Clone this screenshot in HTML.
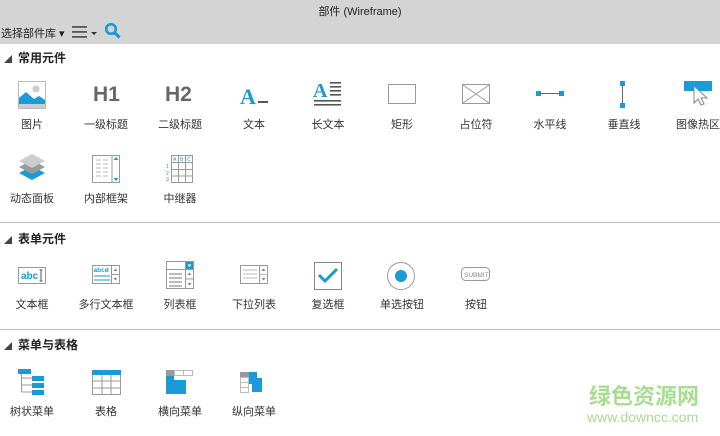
<!DOCTYPE html>
<html><head><meta charset="utf-8"><style>
*{margin:0;padding:0;box-sizing:border-box}
body{width:720px;height:436px;overflow:hidden;background:#fff;font-family:"Liberation Sans","Noto Sans CJK SC",sans-serif;position:relative;color:#333}
.a{position:absolute}
.lbl{position:absolute;width:74px;text-align:center;font-size:11px;color:#333}
.sec{position:absolute;left:4px;font-size:12px;font-weight:bold;color:#222}
.sec span{font-size:8px;color:#444;margin-right:6px;font-weight:normal}
.hr{position:absolute;left:0;width:720px;height:1px;background:#bbb}
svg{position:absolute}
</style></head><body>
<div class="a" style="left:0;top:0;width:720px;height:44px;background:#d4d4d4"></div>
<div class="a" style="left:0;top:3px;width:720px;text-align:center;font-size:11px;color:#222">部件 (Wireframe)</div>
<div class="a" style="left:1px;top:25px;font-size:11px;color:#222">选择部件库 ▾</div>
<svg style="left:72px;top:25px" width="30" height="14"><rect x="0" y="1" width="15" height="1.8" fill="#555"/><rect x="0" y="6" width="15" height="1.8" fill="#555"/><rect x="0" y="11" width="15" height="1.8" fill="#555"/><path d="M19 7h6l-3 3z" fill="#333"/></svg>
<svg style="left:104px;top:22px" width="18" height="18"><circle cx="7" cy="7" r="4.8" fill="none" stroke="#1a9ad6" stroke-width="2.6"/><path d="M10.5 10.5l5 5" stroke="#1a9ad6" stroke-width="3.2"/></svg>

<div class="sec" style="top:49px"><span>◢</span>常用元件</div>
<svg style="left:18px;top:81px" width="28" height="28"><rect x="0.5" y="0.5" width="27" height="27" fill="#fff" stroke="#bbb"/><circle cx="18" cy="8" r="3.5" fill="#ccc"/><path d="M1 17l7-6 8 7 5-3 6 4v6H1z" fill="#1a9ad6"/><rect x="1" y="23" width="26" height="4" fill="#ccc"/></svg>
<div class="a" style="left:93px;top:83px;font-size:21px;font-weight:bold;color:#666">H1</div>
<div class="a" style="left:165px;top:83px;font-size:21px;font-weight:bold;color:#666">H2</div>
<div class="a" style="left:240px;top:84px;font-family:'Liberation Serif',serif;font-size:22px;font-weight:bold;color:#1a9ad6">A</div>
<div class="a" style="left:258px;top:101px;width:10px;height:2px;background:#555"></div>
<div class="a" style="left:313px;top:80px;font-family:'Liberation Serif',serif;font-size:20px;font-weight:bold;color:#1a9ad6">A</div>
<svg style="left:313px;top:81px" width="30" height="28"><rect x="17" y="1" width="11" height="1.6" fill="#555"/><rect x="17" y="5" width="11" height="1.6" fill="#555"/><rect x="17" y="9" width="11" height="1.6" fill="#555"/><rect x="17" y="13" width="11" height="1.6" fill="#555"/><rect x="1" y="19" width="27" height="1.6" fill="#555"/><rect x="1" y="23" width="27" height="1.6" fill="#555"/></svg>
<svg style="left:388px;top:84px" width="30" height="22"><rect x="0.5" y="0.5" width="27" height="19" fill="#fff" stroke="#999"/></svg>
<svg style="left:462px;top:84px" width="30" height="22"><rect x="0.5" y="0.5" width="27" height="19" fill="#fff" stroke="#999"/><path d="M1 1l26 18M27 1L1 19" stroke="#999"/></svg>
<svg style="left:535px;top:89px" width="32" height="10"><rect x="1" y="2" width="5" height="5" fill="#1a9ad6"/><rect x="24" y="2" width="5" height="5" fill="#1a9ad6"/><path d="M5 4.5h20" stroke="#666"/></svg>
<svg style="left:618px;top:80px" width="10" height="30"><rect x="2" y="1" width="5" height="5" fill="#1a9ad6"/><rect x="2" y="23" width="5" height="5" fill="#1a9ad6"/><path d="M4.5 5v19" stroke="#666"/></svg>
<svg style="left:684px;top:80px" width="30" height="30"><rect x="0" y="1" width="28" height="10" fill="#1a9ad6"/><path d="M10 6v17l4-4 3 6 3-1-3-6h6z" fill="#fff" stroke="#888"/></svg>
<div class="lbl" style="left:-5px;top:116px">图片</div>
<div class="lbl" style="left:69px;top:116px">一级标题</div>
<div class="lbl" style="left:143px;top:116px">二级标题</div>
<div class="lbl" style="left:217px;top:116px">文本</div>
<div class="lbl" style="left:291px;top:116px">长文本</div>
<div class="lbl" style="left:365px;top:116px">矩形</div>
<div class="lbl" style="left:439px;top:116px">占位符</div>
<div class="lbl" style="left:513px;top:116px">水平线</div>
<div class="lbl" style="left:587px;top:116px">垂直线</div>
<div class="lbl" style="left:661px;top:116px">图像热区</div>
<svg style="left:17px;top:154px" width="30" height="30"><path d="M15 12l13 7-13 7-13-7z" fill="#1a9ad6"/><path d="M15 6l13 7-13 7-13-7z" fill="#999"/><path d="M15 0l13 7-13 7-13-7z" fill="#ccc"/></svg>
<svg style="left:92px;top:155px" width="30" height="30"><rect x="0.5" y="0.5" width="27" height="27" fill="#fff" stroke="#999"/><rect x="20" y="0.5" width="7.5" height="27" fill="none" stroke="#999"/><path d="M4 5h5M11 5h5M4 9h5M11 9h5M4 13h5M11 13h5M4 17h5M11 17h5M4 21h5M11 21h5" stroke="#bbb"/><path d="M21.5 5l2.5-3 2.5 3zM21.5 23l2.5 3 2.5-3z" fill="#1a9ad6"/></svg>
<svg style="left:166px;top:155px" width="30" height="30"><rect x="5.5" y="0.5" width="21" height="27" fill="#fff" stroke="#999"/><path d="M5.5 7.5h21M5.5 14.5h21M5.5 21h21M12.5 0.5v27M19.5 0.5v27" stroke="#999"/><text x="7" y="6" font-size="5" fill="#1a9ad6" font-family="Liberation Sans">A</text><text x="14" y="6" font-size="5" fill="#1a9ad6" font-family="Liberation Sans">B</text><text x="21" y="6" font-size="5" fill="#1a9ad6" font-family="Liberation Sans">C</text><text x="0" y="13" font-size="5" fill="#1a9ad6" font-family="Liberation Sans">1</text><text x="0" y="20" font-size="5" fill="#1a9ad6" font-family="Liberation Sans">2</text><text x="0" y="26" font-size="5" fill="#1a9ad6" font-family="Liberation Sans">3</text></svg>
<div class="lbl" style="left:-5px;top:190px">动态面板</div>
<div class="lbl" style="left:69px;top:190px">内部框架</div>
<div class="lbl" style="left:143px;top:190px">中继器</div>
<div class="hr" style="top:222px"></div>
<div class="sec" style="top:230px"><span>◢</span>表单元件</div>
<svg style="left:18px;top:267px" width="30" height="20"><rect x="0.5" y="0.5" width="27" height="16" fill="#fff" stroke="#999"/><text x="3" y="12" font-size="10" font-weight="bold" fill="#1a9ad6" font-family="Liberation Sans">abc</text><path d="M23 3v11M21.5 3h3M21.5 14h3" stroke="#555"/></svg>
<svg style="left:92px;top:265px" width="30" height="22"><rect x="0.5" y="0.5" width="27" height="18" fill="#fff" stroke="#999"/><rect x="19.5" y="0.5" width="8" height="18" fill="none" stroke="#999"/><path d="M19.5 9.5h8" stroke="#999"/><text x="1.5" y="7" font-size="6.5" font-weight="bold" fill="#1a9ad6" font-family="Liberation Sans">abcd</text><path d="M2 11h16M2 15h16" stroke="#1a9ad6"/><path d="M21.5 6l2-2.5 2 2.5zM21.5 13l2 2.5 2-2.5z" fill="#888"/></svg>
<svg style="left:166px;top:261px" width="30" height="30"><rect x="0.5" y="0.5" width="27" height="27" fill="#fff" stroke="#999"/><path d="M0.5 8.5h27M19.5 0.5v27M19.5 18h8" stroke="#999"/><rect x="20" y="1" width="7" height="7" fill="#1a9ad6"/><path d="M21.5 3.5h4l-2 2.5z" fill="#fff"/><path d="M3 13h13M3 17h13M3 21h13M3 25h13" stroke="#777"/><path d="M21.5 14l2-2.5 2 2.5zM21.5 22l2 2.5 2-2.5z" fill="#888"/></svg>
<svg style="left:240px;top:265px" width="30" height="22"><rect x="0.5" y="0.5" width="27" height="18" fill="#fff" stroke="#999"/><rect x="19.5" y="0.5" width="8" height="18" fill="none" stroke="#999"/><path d="M19.5 9.5h8M3 5h14M3 9h14M3 13h14" stroke="#bbb"/><path d="M21.5 6l2-2.5 2 2.5zM21.5 13l2 2.5 2-2.5z" fill="#888"/></svg>
<svg style="left:314px;top:262px" width="30" height="30"><rect x="0.5" y="0.5" width="27" height="27" fill="#fff" stroke="#888"/><path d="M5 13l6 6 12-12" fill="none" stroke="#1a9ad6" stroke-width="3"/></svg>
<svg style="left:387px;top:262px" width="30" height="30"><circle cx="14" cy="14" r="13.5" fill="#fff" stroke="#999"/><circle cx="14" cy="14" r="6" fill="#1a9ad6"/></svg>
<svg style="left:461px;top:267px" width="32" height="18"><rect x="0.5" y="0.5" width="28" height="13" rx="4" fill="#fff" stroke="#999"/><text x="3" y="10" font-size="6.5" fill="#888" font-family="Liberation Sans">SUBMIT</text></svg>
<div class="lbl" style="left:-5px;top:296px">文本框</div>
<div class="lbl" style="left:69px;top:296px">多行文本框</div>
<div class="lbl" style="left:143px;top:296px">列表框</div>
<div class="lbl" style="left:217px;top:296px">下拉列表</div>
<div class="lbl" style="left:291px;top:296px">复选框</div>
<div class="lbl" style="left:365px;top:296px">单选按钮</div>
<div class="lbl" style="left:439px;top:296px">按钮</div>
<div class="hr" style="top:329px"></div>
<div class="sec" style="top:336px"><span>◢</span>菜单与表格</div>
<svg style="left:17px;top:368px" width="30" height="30"><rect x="1" y="1" width="13" height="5" fill="#1a9ad6"/><path d="M4.5 6v18M4.5 10h12M4.5 17h12M4.5 24h12" stroke="#999"/><rect x="15" y="8" width="12" height="5" fill="#1a9ad6"/><rect x="15" y="15" width="12" height="5" fill="#1a9ad6"/><rect x="15" y="22" width="12" height="5" fill="#1a9ad6"/></svg>
<svg style="left:92px;top:370px" width="30" height="26"><rect x="0.5" y="0.5" width="28" height="24" fill="#fff" stroke="#999"/><rect x="0" y="0" width="29" height="5" fill="#1a9ad6"/><path d="M0.5 11h28M0.5 18h28M10 5v20M19 5v20" stroke="#999"/></svg>
<svg style="left:166px;top:370px" width="30" height="26"><rect x="0" y="0" width="8" height="6" fill="#999"/><rect x="8.5" y="0.5" width="9" height="5" fill="#fff" stroke="#bbb"/><rect x="17.5" y="0.5" width="9" height="5" fill="#fff" stroke="#bbb"/><rect x="0" y="6" width="8" height="8" fill="#1a9ad6"/><rect x="0" y="14" width="20" height="10" fill="#1a9ad6"/><rect x="8" y="10" width="12" height="6" fill="#1a9ad6"/></svg>
<svg style="left:240px;top:372px" width="30" height="26"><rect x="0" y="0" width="9" height="5" fill="#999"/><rect x="0.5" y="5.5" width="8" height="5" fill="#fff" stroke="#bbb"/><rect x="0.5" y="10.5" width="8" height="5" fill="#fff" stroke="#bbb"/><rect x="0.5" y="15.5" width="8" height="5" fill="#fff" stroke="#bbb"/><rect x="9" y="0" width="8" height="12" fill="#1a9ad6"/><rect x="12" y="6" width="10" height="14" fill="#1a9ad6"/></svg>
<div class="lbl" style="left:-5px;top:403px">树状菜单</div>
<div class="lbl" style="left:69px;top:403px">表格</div>
<div class="lbl" style="left:143px;top:403px">横向菜单</div>
<div class="lbl" style="left:217px;top:403px">纵向菜单</div>
<div class="a" style="left:589px;top:379px;font-size:22px;font-weight:bold;color:#a8dc90">绿色资源网</div>
<div class="a" style="left:587px;top:409px;font-size:14px;color:#a8dc90">www.downcc.com</div>
</body></html>
